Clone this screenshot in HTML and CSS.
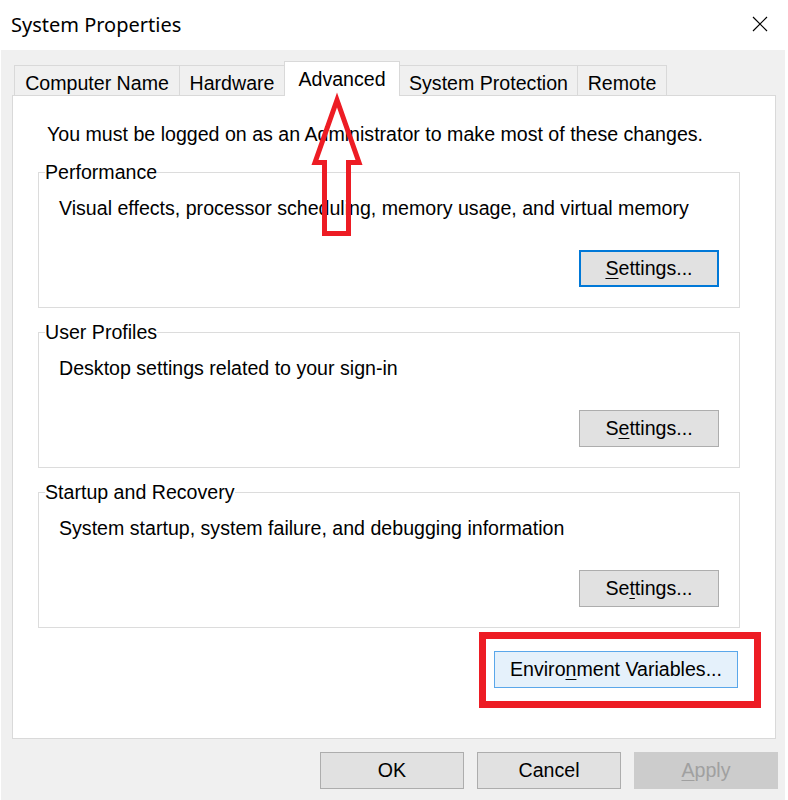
FILE: index.html
```html
<!DOCTYPE html>
<html>
<head>
    <link rel="stylesheet" href="styles.css">
</head>
<body>
    <div class="window">
        <div class="titlebar">
            <span class="title">System Properties</span>
            <button class="close-btn" aria-label="Close">
                <svg width="16" height="16" viewBox="0 0 16 16">
                    <path d="M1 1 L15 15 M15 1 L1 15" stroke="#000" stroke-width="1.2" fill="none"/>
                </svg>
            </button>
        </div>

        <div class="dialog">
            <div class="tabs">
                <div class="tab tab-name">Computer Name</div>
                <div class="tab tab-hardware">Hardware</div>
                <div class="tab tab-advanced active">Advanced</div>
                <div class="tab tab-protection">System Protection</div>
                <div class="tab tab-remote">Remote</div>
            </div>

            <div class="panel">
                <p class="notice">You must be logged on as an Administrator to make most of these changes.</p>

                <fieldset class="group">
                    <legend>Performance</legend>
                    <p class="group-text">Visual effects, processor scheduling, memory usage, and virtual memory</p>
                    <div class="group-actions">
                        <button class="btn focused"><u>S</u>ettings...</button>
                    </div>
                </fieldset>

                <fieldset class="group">
                    <legend>User Profiles</legend>
                    <p class="group-text">Desktop settings related to your sign-in</p>
                    <div class="group-actions">
                        <button class="btn">S<u>e</u>ttings...</button>
                    </div>
                </fieldset>

                <fieldset class="group">
                    <legend>Startup and Recovery</legend>
                    <p class="group-text">System startup, system failure, and debugging information</p>
                    <div class="group-actions">
                        <button class="btn">Se<u>t</u>tings...</button>
                    </div>
                </fieldset>

                <div class="highlight">
                    <button class="btn hover env-btn">Enviro<u>n</u>ment Variables...</button>
                </div>

                <!-- annotation arrow pointing at the Advanced tab -->
                <svg class="arrow" width="70" height="160" viewBox="0 0 70 160">
                    <polygon points="35,17 13,79.5 22.5,79.5 22.5,150.5 46.5,150.5 46.5,79.5 57,79.5"
                             fill="none" stroke="#ed1c24" stroke-width="5" stroke-miterlimit="10"/>
                </svg>
            </div>

            <div class="footer">
                <button class="btn dlg-btn">OK</button>
                <button class="btn dlg-btn">Cancel</button>
                <button class="btn dlg-btn" disabled><u>A</u>pply</button>
            </div>
        </div>
    </div>
</body>
</html>
```

FILE: styles.css
```css
body {
    margin: 0;
    background: #fff;
    font-family: "Liberation Sans", Arial, sans-serif;
    font-size: 19.6px;
    color: #000;
}

.window {
    width: 788px;
    height: 800px;
    overflow: hidden;
}

.titlebar {
    height: 50px;
    display: flex;
    align-items: center;
    justify-content: space-between;
    background: #fff;
}

.title {
    font-family: "Noto Sans", sans-serif;
    font-size: 20px;
    padding-left: 11px;
    padding-bottom: 2px;
}

.close-btn {
    background: none;
    border: none;
    padding: 0;
    margin-right: 20px;
    margin-bottom: 3px;
    display: flex;
}

.dialog {
    background: #f0f0f0;
    height: 750px;
    margin: 0 3px 0 1px;
    padding: 11px 0 0 11px;
    box-sizing: border-box;
}

.tabs {
    display: flex;
    align-items: flex-end;
    height: 34px;
    padding-left: 2px;
    position: relative;
    z-index: 1;
}

.tab {
    height: 30px;
    padding-top: 5px;
    line-height: 24px;
    text-align: center;
    white-space: nowrap;
    border: 1px solid #d9d9d9;
    border-bottom: none;
    margin-right: -1px;
    background: #f0f0f0;
    box-sizing: border-box;
}

.tab.active {
    height: 35px;
    padding-top: 1px;
    line-height: 32px;
    margin-bottom: -1px;
    background: #fff;
}

.tab-name { width: 166px; }
.tab-hardware { width: 106px; }
.tab-advanced { width: 116px; }
.tab-protection { width: 179px; }
.tab-remote { width: 90px; }

.panel {
    position: relative;
    width: 764px;
    height: 644px;
    box-sizing: border-box;
    background: #fff;
    border: 1px solid #d9d9d9;
    padding: 27px 35px 0 25px;
    display: flex;
    flex-direction: column;
}

.notice {
    margin: 0 0 0 9px;
    line-height: 22px;
}

.group {
    margin: 16px 0 0 0;
    padding: 0 20px 20px 6px;
    border: 1px solid #dcdcdc;
    min-width: 0;
}

.group + .group {
    margin-top: 13px;
}

.group legend {
    padding: 0;
    line-height: 22px;
}

.group-text {
    margin: 14px 0 0 14px;
    line-height: 22px;
}

.group-actions {
    display: flex;
    justify-content: flex-end;
    margin-top: 31px;
}

.btn {
    font-family: "Liberation Sans", Arial, sans-serif;
    font-size: 19.6px;
    color: #000;
    background: #e1e1e1;
    border: 1px solid #adadad;
    height: 37px;
    width: 140px;
    padding: 0;
    box-sizing: border-box;
}

.btn u {
    text-underline-offset: 3px;
}

.btn.focused {
    border: 2px solid #0078d7;
}

.btn.hover {
    background: #e5f1fb;
    border-color: #5aa7ea;
}

.btn:disabled {
    background: #cccccc;
    border-color: #cccccc;
    color: #a0a0a0;
}

.highlight {
    align-self: flex-end;
    margin: 4px -21px 0 0;
    border: 7px solid #ed1c24;
    padding: 12px 16px 13px 8px;
    display: flex;
}

.env-btn {
    width: 244px;
}

.arrow {
    position: absolute;
    left: 289px;
    top: -13px;
    z-index: 2;
}

.footer {
    display: flex;
    justify-content: flex-end;
    gap: 13px;
    margin-top: 13px;
    width: 766px;
}

.dlg-btn {
    width: 144px;
}
```
